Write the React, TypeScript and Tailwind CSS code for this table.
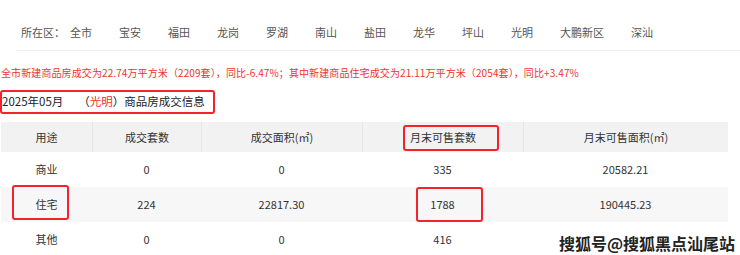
import React from 'react';

const districts = ['全市', '宝安', '福田', '龙岗', '罗湖', '南山', '盐田', '龙华', '坪山', '光明', '大鹏新区', '深汕'];

const cols = ['w-[91px]', 'w-[109px]', 'w-[161px]', 'w-[161px]', 'w-[205px]'];

const headers = ['用途', '成交套数', '成交面积(㎡)', '月末可售套数', '月末可售面积(㎡)'];

const rows = [
  ['商业', '0', '0', '335', '20582.21'],
  ['住宅', '224', '22817.30', '1788', '190445.23'],
  ['其他', '0', '0', '416', ''],
];

// red annotation frames drawn over the screenshot
const Mark = ({ className }: { className: string }) => (
  <span className={`pointer-events-none absolute border-2 border-[#f5222d] rounded-[3px] ${className}`} />
);

export default function App() {
  return (
    <div className="relative w-[740px] h-[255px] overflow-hidden bg-white text-[#333] font-['Microsoft_YaHei','Noto_Sans_CJK_SC',sans-serif]">
      {/* district filter */}
      <div className="ml-[17px] pt-[24px] pb-[10px] border-b border-[#eeeeee]">
        <div className="flex items-center pl-[4px] text-[11px] leading-[16px] text-[#555]">
          <span className="w-[49px]">所在区：</span>
          <div className="flex gap-[27px]">
            {districts.map((d) => (
              <span key={d}>{d}</span>
            ))}
          </div>
        </div>
      </div>

      <p className="mt-[14px] pl-[1px] text-[10px] tracking-[0.1px] leading-[16px] text-[#f0312e] whitespace-nowrap">
        全市新建商品房成交为22.74万平方米（2209套），同比-6.47%；其中新建商品住宅成交为21.11万平方米（2054套），同比+3.47%
      </p>

      <div className="mt-[9px] w-[215px] h-[24px] flex items-center border-2 border-[#f5222d] rounded-[3px] text-[11.5px] text-[#222] whitespace-nowrap">
        <span>2025年05月</span>
        <span className="ml-[15px]">（<span className="text-[#f0312e]">光明</span>）商品房成交信息</span>
      </div>

      <div className="mt-[8px] ml-[1px] w-[727px] text-[11px] text-[#333]">
        <div className="flex h-[30px] bg-[#f2f2f2]">
          {headers.map((h, i) => (
            <div
              key={h}
              className={`relative ${cols[i]} flex items-center justify-center ${i > 0 ? 'border-l border-[#e6e6e6]' : ''}`}
            >
              {h}
              {i === 3 && <Mark className="left-[40px] top-[3px] w-[96px] h-[26px]" />}
            </div>
          ))}
        </div>
        {rows.map((r, ri) => (
          <div key={ri} className={`flex h-[35px] ${ri === 1 ? 'bg-[#f7f7f7]' : ''}`}>
            {r.map((c, ci) => (
              <div key={ci} className={`relative ${cols[ci]} flex items-center justify-center`}>
                {c}
                {ri === 1 && ci === 0 && <Mark className="left-[11px] -top-[2px] w-[57px] h-[35px]" />}
                {ri === 1 && ci === 3 && <Mark className="left-[54px] top-0 w-[67px] h-[35px]" />}
              </div>
            ))}
          </div>
        ))}
      </div>

      {/* watermark */}
      <div className="absolute right-[5px] top-[231px] text-[16px] font-bold text-[#222] [text-shadow:1px_1px_0_#fff,-1px_-1px_0_#fff,1px_-1px_0_#fff,-1px_1px_0_#fff]">
        搜狐号@搜狐黑点汕尾站
      </div>
    </div>
  );
}
